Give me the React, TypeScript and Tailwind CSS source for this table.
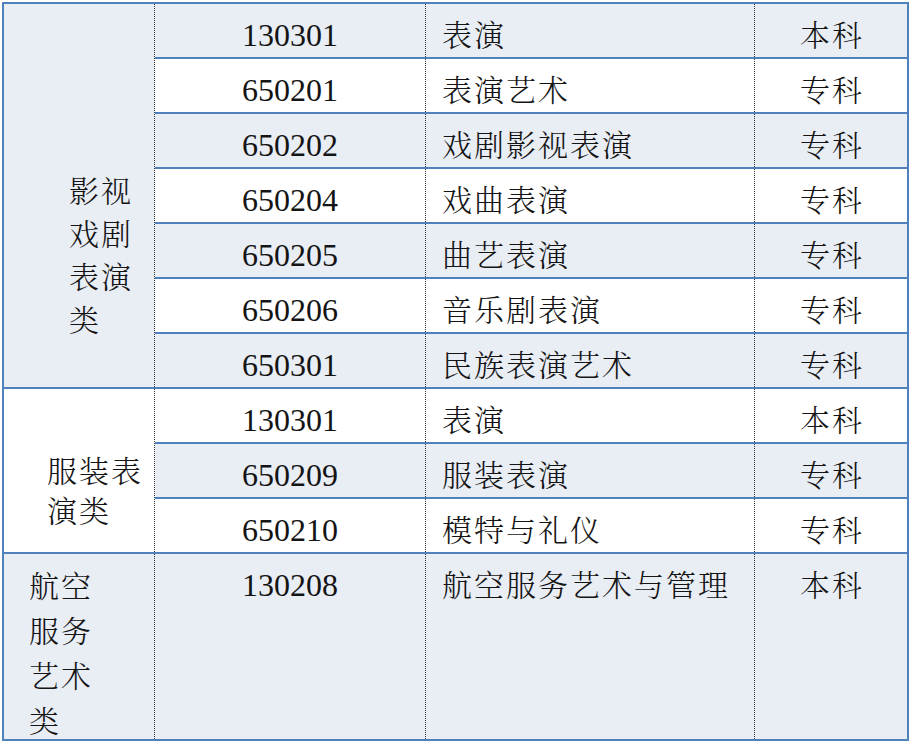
import React from "react";

type Row = { code: string; name: string; level: string };
type Group = {
  label: string[];
  labelClass: string;
  blue: boolean;
  rows: Row[];
  firstBlue: boolean;
  last?: boolean;
};

const groups: Group[] = [
  {
    label: ["影视", "戏剧", "表演", "类"],
    labelClass: "pt-[164px] pl-[65px] leading-[43px]",
    blue: true,
    firstBlue: true,
    rows: [
      { code: "130301", name: "表演", level: "本科" },
      { code: "650201", name: "表演艺术", level: "专科" },
      { code: "650202", name: "戏剧影视表演", level: "专科" },
      { code: "650204", name: "戏曲表演", level: "专科" },
      { code: "650205", name: "曲艺表演", level: "专科" },
      { code: "650206", name: "音乐剧表演", level: "专科" },
      { code: "650301", name: "民族表演艺术", level: "专科" },
    ],
  },
  {
    label: ["服装表", "演类"],
    labelClass: "pt-[60px] pl-[43px] leading-[40px]",
    blue: false,
    firstBlue: false,
    rows: [
      { code: "130301", name: "表演", level: "本科" },
      { code: "650209", name: "服装表演", level: "专科" },
      { code: "650210", name: "模特与礼仪", level: "专科" },
    ],
  },
  {
    label: ["航空", "服务", "艺术", "类"],
    labelClass: "pt-[8px] pl-[25px] leading-[45px]",
    blue: true,
    firstBlue: true,
    last: true,
    rows: [{ code: "130208", name: "航空服务艺术与管理", level: "本科" }],
  },
];

const cjk = { fontFamily: '"Noto Serif CJK SC", "Noto Sans CJK SC", sans-serif' };
const num = { fontFamily: '"Liberation Serif", "Noto Sans CJK SC", serif' };

export default function App() {
  return (
    <div className="bg-white w-[910px] h-[744px] pt-[2px] pl-[2px] text-[#141414]">
      <div className="w-[907px] border-2 border-[#4f81bd] flex flex-col">
        {groups.map((g, gi) => (
          <div
            key={gi}
            className={
              "flex " + (g.last ? "h-[185px]" : "border-b-2 border-[#4f81bd]")
            }
          >
            <div
              className={
                "w-[151px] shrink-0 border-r border-dotted border-[#333] " +
                (g.blue ? "bg-[#e9edf4]" : "bg-white")
              }
            >
              <div
                className={"text-[30px] font-light tracking-[2px] " + g.labelClass}
                style={cjk}
              >
                {g.label.map((l, li) => (
                  <div key={li}>{l}</div>
                ))}
              </div>
            </div>
            <div className="flex-1 flex flex-col">
              {g.rows.map((r, ri) => {
                const blue = (ri % 2 === 0) === g.firstBlue;
                const isLast = ri === g.rows.length - 1;
                return (
                  <div
                    key={ri}
                    className={
                      "flex " +
                      (g.last ? "flex-1 " : "h-[53px] ") +
                      (!isLast ? "h-[55px] border-b-2 border-[#4f81bd] " : "") +
                      (blue ? "bg-[#e9edf4]" : "bg-white")
                    }
                  >
                    <div className="w-[271px] shrink-0 border-r border-dotted border-[#333]">
                      <div
                        className="pt-[16px] text-center text-[32px] leading-[30px] font-normal"
                        style={num}
                      >
                        {r.code}
                      </div>
                    </div>
                    <div className="w-[329px] shrink-0 border-r border-dotted border-[#333]">
                      <div
                        className="pt-[14px] pl-[16px] text-[30px] leading-[30px] font-light tracking-[2px] whitespace-nowrap"
                        style={cjk}
                      >
                        {r.name}
                      </div>
                    </div>
                    <div className="flex-1">
                      <div
                        className="pt-[14px] pl-[2px] text-center text-[30px] leading-[30px] font-light tracking-[2px]"
                        style={cjk}
                      >
                        {r.level}
                      </div>
                    </div>
                  </div>
                );
              })}
            </div>
          </div>
        ))}
      </div>
    </div>
  );
}
